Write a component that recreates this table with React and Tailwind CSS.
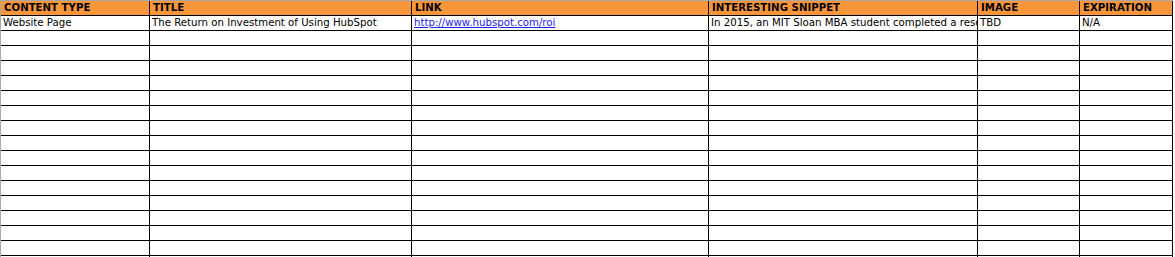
const columns = [
  { key: 'type', label: 'CONTENT TYPE', width: 'w-[149px]' },
  { key: 'title', label: 'TITLE', width: 'w-[262px]' },
  { key: 'link', label: 'LINK', width: 'w-[297px]' },
  { key: 'snippet', label: 'INTERESTING SNIPPET', width: 'w-[269px]' },
  { key: 'image', label: 'IMAGE', width: 'w-[102px]' },
  { key: 'expiration', label: 'EXPIRATION', width: 'w-[93px]' },
];

const firstRow = {
  type: 'Website Page',
  title: 'The Return on Investment of Using HubSpot',
  link: 'http://www.hubspot.com/roi',
  snippet: 'In 2015, an MIT Sloan MBA student completed a research study on HubSpot customers',
  image: 'TBD',
  expiration: 'N/A',
};

const rows = [firstRow, ...Array.from({ length: 16 }, () => ({}))];

export default function App() {
  return (
    <div
      className="w-[1175px] h-[257px] overflow-hidden bg-white text-black text-[10.2px] leading-[14px]"
      style={{ fontFamily: '"DejaVu Sans", Verdana, sans-serif' }}
    >
      <div className="w-max border-t border-l border-[#a8a8a8]">
        {/* header */}
        <div className="flex bg-[#f9963b] font-bold">
          {columns.map((col) => (
            <div
              key={col.key}
              className={`${col.width} h-[15px] shrink-0 border-r border-b border-black px-[3px] whitespace-nowrap overflow-hidden`}
            >
              {col.label}
            </div>
          ))}
        </div>

        {rows.map((row, i) => (
          <div key={i} className="flex">
            {columns.map((col) => (
              <div
                key={col.key}
                className={`${col.width} h-[15px] shrink-0 border-r border-b border-black px-[2px] whitespace-nowrap overflow-hidden`}
              >
                {col.key === 'link' && row.link ? (
                  <span className="text-[#2222ee] underline">{row.link}</span>
                ) : (
                  row[col.key]
                )}
              </div>
            ))}
          </div>
        ))}
      </div>
    </div>
  );
}
